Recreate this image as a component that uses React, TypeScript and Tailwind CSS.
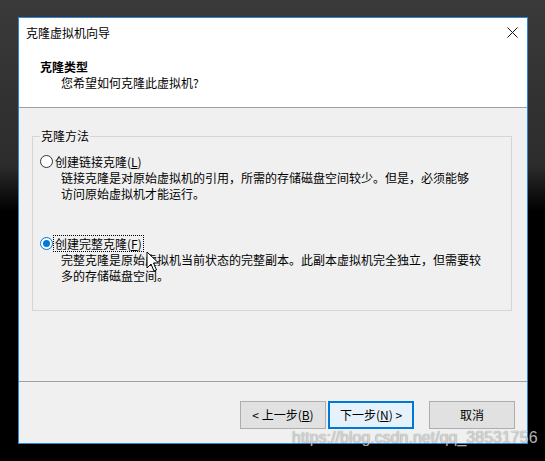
import React from "react";

const cjk = "font-['Noto_Sans_CJK_SC','Noto_Sans',sans-serif]";

function Radio({ checked }: { checked?: boolean }) {
  return checked ? (
    <span className="w-[13px] h-[13px] rounded-full border border-[#0078d7] bg-white flex items-center justify-center shrink-0">
      <span className="w-[7px] h-[7px] rounded-full bg-[#0078d7]" />
    </span>
  ) : (
    <span className="w-[13px] h-[13px] rounded-full border border-[#333333] bg-white shrink-0" />
  );
}

function Btn({
  children,
  primary,
}: {
  children: React.ReactNode;
  primary?: boolean;
}) {
  return (
    <div
      className={
        primary
          ? "w-[86px] h-[28px] border-2 border-[#0078d7] bg-[#e5f1fb] flex items-center justify-center text-[12px] text-black"
          : "w-[86px] h-[28px] border border-[#adadad] bg-[#e1e1e1] flex items-center justify-center text-[12px] text-black"
      }
    >
      {children}
    </div>
  );
}

export default function App() {
  return (
    <div
      className={`relative w-[545px] h-[461px] overflow-hidden bg-[linear-gradient(180deg,#3a3a3a_0%,#2c2c2c_36%,#101010_42%,#000_46%)] ${cjk}`}
    >
      <div className="pt-[17px] pl-[18px]">
        <div className="w-[510px] h-[427px] border border-[#2b88d8] flex flex-col bg-[#f0f0f0]">
          {/* title + header */}
          <div className="h-[89px] bg-white flex flex-col">
            <div className="h-[29px] flex items-center justify-between pl-[7px]">
              <span className="text-[12px] leading-[16px] text-black">克隆虚拟机向导</span>
              <svg width="11" height="11" viewBox="0 0 11 11" className="mr-[9px]">
                <path d="M0.5 0.5 L10.5 10.5 M10.5 0.5 L0.5 10.5" stroke="#111" strokeWidth="1" />
              </svg>
            </div>
            <div className="pt-[12px] flex flex-col">
              <div className="pl-[21px] text-[12px] leading-[16px] font-bold text-black">克隆类型</div>
              <div className="pl-[42px] text-[12px] leading-[16px] text-black">您希望如何克隆此虚拟机?</div>
            </div>
          </div>
          <div className="h-px bg-[#a0a0a0]" />
          {/* content */}
          <div className="h-[273px] pt-[28px] pl-[13px]">
            <div className="w-[480px] h-[175px] border border-[#d5d5d5] flex flex-col">
              <div className="-mt-[9px] ml-[7px] px-[1px] w-fit bg-[#f0f0f0] text-[12px] leading-[16px] text-black">
                克隆方法
              </div>
              <div className="mt-[9px] pl-[7px] flex items-center h-[17px]">
                <Radio />
                <span className="px-[1px] text-[12px] leading-[15px] text-black border border-transparent">
                  创建链接克隆(<span className="underline">L</span>)
                </span>
              </div>
              <div className="pl-[28px] text-[12px] leading-[16px] text-black">
                <div>链接克隆是对原始虚拟机的引用，所需的存储磁盘空间较少。但是，必须能够</div>
                <div>访问原始虚拟机才能运行。</div>
              </div>
              <div className="mt-[33px] pl-[7px] flex items-center h-[17px]">
                <Radio checked />
                <span className="px-[1px] text-[12px] leading-[15px] text-black border border-dotted border-black">
                  创建完整克隆(<span className="underline">F</span>)
                </span>
              </div>
              <div className="pl-[28px] text-[12px] leading-[16px] text-black">
                <div>完整克隆是原始虚拟机当前状态的完整副本。此副本虚拟机完全独立，但需要较</div>
                <div>多的存储磁盘空间。</div>
              </div>
            </div>
          </div>
          <div className="h-px bg-[#a0a0a0]" />
          {/* buttons */}
          <div className="flex-1 pt-[19px] pr-[12px] flex justify-end items-start">
            <Btn>
              &lt; 上一步(<span className="underline">B</span>)
            </Btn>
            <div className="w-[2px]" />
            <Btn primary>
              下一步(<span className="underline">N</span>) &gt;
            </Btn>
            <div className="w-[15px]" />
            <Btn>取消</Btn>
          </div>
        </div>
      </div>

      {/* mouse cursor */}
      <svg
        className="absolute left-[146px] top-[251px]"
        width="14"
        height="22"
        viewBox="0 0 14 22"
      >
        <path
          d="M1 1 L1 17 L5 13 L8 20 L10.5 19 L7.5 12 L12.5 12 Z"
          fill="#ffffff"
          stroke="#000000"
          strokeWidth="1"
          strokeLinejoin="round"
        />
      </svg>

      {/* watermark */}
      <div className="absolute left-[292px] top-[429px] font-['Liberation_Sans',Arial,sans-serif] text-[16px] leading-[18px] text-white/70 [text-shadow:0_0_1px_rgba(0,0,0,0.6)] whitespace-nowrap">
        https://blog.csdn.net/qq_38531756
      </div>
    </div>
  );
}
